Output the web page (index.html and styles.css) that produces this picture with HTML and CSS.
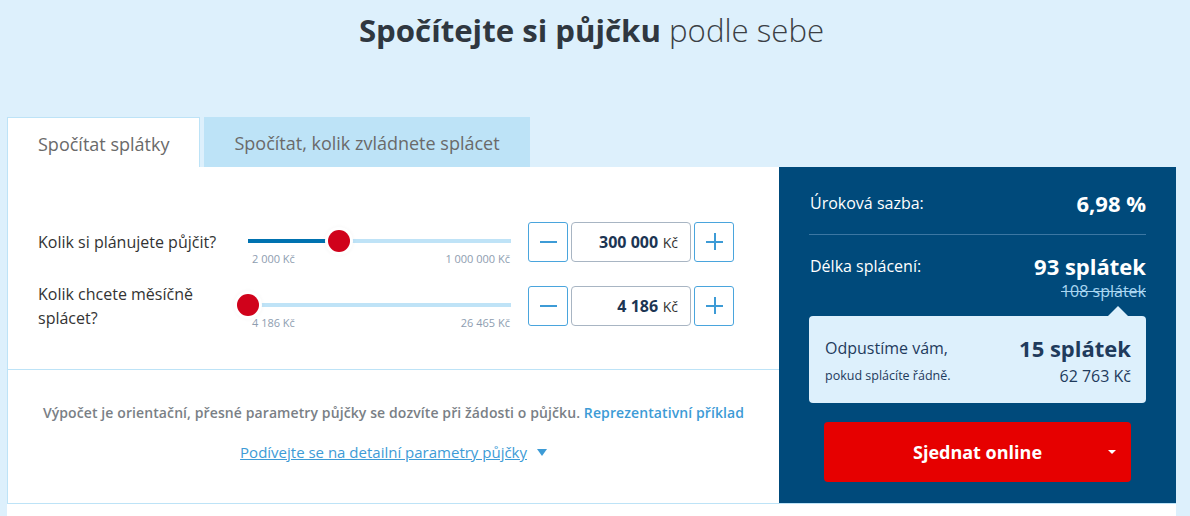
FILE: index.html
```html
<!DOCTYPE html>
<html lang="cs">
<head>
    <meta charset="UTF-8">
    <meta name="viewport" content="width=device-width, initial-scale=1.0">
    <title>Spočítejte si půjčku podle sebe</title>
    <link rel="stylesheet" href="styles.css">
</head>
<body>
    <!-- Nadpis -->
    <h1 class="title"><strong>Spočítejte si půjčku</strong> podle sebe</h1>

    <div class="calc">
        <!-- Záložky -->
        <div class="tabs">
            <div class="tab active">Spočítat splátky</div>
            <div class="tab">Spočítat, kolik zvládnete splácet</div>
        </div>

        <div class="card">
            <div class="card-left">
                <div class="sliders">
                    <div class="row">
                        <label class="row-label">Kolik si plánujete půjčit?</label>
                        <div class="slider">
                            <div class="track">
                                <div class="fill" style="width: 31%"></div>
                                <div class="thumb" style="left: 34.6%"></div>
                            </div>
                            <div class="range-labels">
                                <span>2 000 Kč</span>
                                <span>1 000 000 Kč</span>
                            </div>
                        </div>
                        <div class="stepper">
                            <button class="step minus" aria-label="Méně"></button>
                            <div class="value"><b>300 000</b> Kč</div>
                            <button class="step plus" aria-label="Více"></button>
                        </div>
                    </div>
                    <div class="row">
                        <label class="row-label">Kolik chcete měsíčně<br>splácet?</label>
                        <div class="slider">
                            <div class="track">
                                <div class="thumb" style="left: 0%"></div>
                            </div>
                            <div class="range-labels">
                                <span>4 186 Kč</span>
                                <span>26 465 Kč</span>
                            </div>
                        </div>
                        <div class="stepper">
                            <button class="step minus" aria-label="Méně"></button>
                            <div class="value"><b>4 186</b> Kč</div>
                            <button class="step plus" aria-label="Více"></button>
                        </div>
                    </div>
                </div>

                <div class="note">
                    <p>Výpočet je orientační, přesné parametry půjčky se dozvíte při žádosti o půjčku. <a href="#">Reprezentativní příklad</a></p>
                    <p class="more-link"><a href="#" class="details">Podívejte se na detailní parametry půjčky</a> <span class="caret-blue"></span></p>
                </div>
            </div>

            <!-- Výsledek -->
            <div class="card-right">
                <div class="result-row rate">
                    <span>Úroková sazba:</span>
                    <strong>6,98 %</strong>
                </div>
                <div class="result-row length">
                    <span>Délka splácení:</span>
                    <strong>93 splátek</strong>
                </div>
                <div class="old">108 splátek</div>

                <div class="forgive">
                    <span class="forgive-big">Odpustíme vám,</span>
                    <strong>15 splátek</strong>
                    <span class="forgive-small">pokud splácíte řádně.</span>
                    <span class="forgive-sum">62 763 Kč</span>
                </div>

                <button class="cta">Sjednat online <span class="caret"></span></button>
            </div>
        </div>
        <div class="more"></div>
    </div>
</body>
</html>
```

FILE: styles.css
```css
/* základ */
body {
    margin: 0;
    height: 516px;
    overflow: hidden;
    background: #ddf0fc;
    font-family: 'Open Sans', 'Noto Sans', sans-serif;
    color: #333;
}

.title {
    margin: 0 14px 0 7px;
    padding-top: 10px;
    height: 107px;
    box-sizing: border-box;
    text-align: center;
    font-size: 31.2px;
    line-height: 40px;
    font-weight: 300;
    color: #3b3f45;
}

.title strong {
    font-weight: 700;
    color: #2f3740;
}

.calc {
    margin: 0 14px 0 7px;
}

/* záložky */
.tabs {
    display: flex;
    gap: 4px;
    margin-top: 10px;
}

.tab {
    height: 50px;
    line-height: 52px;
    padding: 0 30px;
    font-size: 18px;
    color: #6a6a6a;
    background: #bde3f7;
    box-sizing: border-box;
}

.tab.active {
    background: #fff;
    border: 1px solid #bde3f7;
    border-bottom: none;
    padding: 0 30px;
}

/* karta */
.card {
    display: flex;
    height: 336px;
    background: #fff;
    border-left: 1px solid #bde3f7;
    border-bottom: 1px solid #bde3f7;
}

.card-left {
    flex: 1;
    display: flex;
    flex-direction: column;
}

.sliders {
    height: 203px;
    padding: 55px 0 0 30px;
    box-sizing: border-box;
    border-bottom: 1px solid #bde3f7;
}

.row {
    display: flex;
    align-items: center;
    height: 40px;
    margin-bottom: 24px;
}

.row-label {
    width: 210px;
    font-size: 16px;
    line-height: 24px;
    color: #333;
}

.slider {
    width: 263px;
    margin-right: 17px;
    padding-top: 17px;
    align-self: flex-start;
}

.track {
    position: relative;
    height: 4px;
    background: #bfe3f7;
}

.fill {
    height: 100%;
    background: #0072b0;
}

.thumb {
    position: absolute;
    top: 50%;
    width: 22px;
    height: 22px;
    margin: -11px 0 0 -11px;
    border-radius: 50%;
    background: #d0021b;
    box-shadow: 0 0 0 3px #fff, 0 0 4px 3px rgba(0,0,0,0.04);
}

.range-labels {
    display: flex;
    justify-content: space-between;
    margin-top: 9px;
    padding: 0 1px 0 4px;
    font-size: 11px;
    line-height: 14px;
    color: #8e9db0;
}

.stepper {
    display: flex;
    gap: 3px;
}

.step {
    position: relative;
    width: 40px;
    height: 40px;
    padding: 0;
    border: 1px solid #4aa5dd;
    border-radius: 3px;
    background: #fff;
    cursor: pointer;
}

.step::before,
.plus::after {
    content: '';
    position: absolute;
    left: 11px;
    top: 18px;
    width: 17px;
    height: 2px;
    background: #3d9bd6;
}

.plus::after {
    left: 19px;
    top: 10px;
    width: 2px;
    height: 17px;
}

.value {
    width: 120px;
    height: 40px;
    box-sizing: border-box;
    border: 1px solid #a8b5c3;
    border-radius: 4px;
    padding-right: 12px;
    text-align: right;
    line-height: 38px;
    font-size: 14px;
    color: #333;
}

.value b {
    font-size: 16px;
    color: #1c3553;
    margin-right: 1px;
}

/* poznámka */
.note {
    flex: 1;
    text-align: center;
    padding-top: 34px;
    font-size: 14px;
}

.note p {
    margin: 0 0 21px;
    line-height: 18px;
    font-weight: 600;
    color: #7a7f86;
    letter-spacing: 0.1px;
}

.note a {
    color: #3d9bd6;
    text-decoration: none;
}

.note .more-link {
    font-size: 15px;
    letter-spacing: 0;
}

.note a.details {
    font-weight: 400;
    text-decoration: underline;
}

.caret-blue {
    display: inline-block;
    margin-left: 6px;
    border-left: 5px solid transparent;
    border-right: 5px solid transparent;
    border-top: 7px solid #3d9bd6;
    vertical-align: 2px;
}

/* pravý panel */
.card-right {
    width: 336px;
    padding: 20px 30px 0 31px;
    background: #004a7b;
    color: #fff;
}

.result-row {
    display: flex;
    justify-content: space-between;
    align-items: center;
    height: 32px;
    font-size: 16px;
}

.result-row strong {
    font-size: 22px;
}

.rate {
    padding-bottom: 15px;
    border-bottom: 1px solid #3c77a3;
    margin-bottom: 15px;
    margin-left: -1px;
    padding-left: 1px;
}

.old {
    text-align: right;
    font-size: 16px;
    line-height: 18px;
    color: #a9d6f1;
    text-decoration: line-through;
}

.forgive {
    position: relative;
    display: grid;
    grid-template-columns: 1fr auto;
    margin: 16px 0 0 -1px;
    padding: 18px 15px 13px 16px;
    background: #ddf0fc;
    border-radius: 4px;
    color: #1f3b5c;
}

.forgive::before {
    content: '';
    position: absolute;
    top: -10px;
    right: 18px;
    border-left: 10px solid transparent;
    border-right: 10px solid transparent;
    border-bottom: 10px solid #ddf0fc;
}

.forgive > * {
    line-height: 28px;
}

.forgive-big {
    font-size: 16px;
}

.forgive strong {
    font-size: 22px;
    text-align: right;
}

.forgive-small {
    font-size: 12.5px;
}

.forgive-sum {
    font-size: 16px;
    text-align: right;
}

.cta {
    position: relative;
    display: block;
    width: 307px;
    height: 60px;
    margin: 19px 0 0 14px;
    border: none;
    border-radius: 4px;
    background: #e60000;
    color: #fff;
    font-family: inherit;
    font-size: 18px;
    font-weight: 700;
    cursor: pointer;
}

.caret {
    position: absolute;
    right: 15px;
    top: 28px;
    border-left: 4px solid transparent;
    border-right: 4px solid transparent;
    border-top: 4px solid #fff;
}

.more {
    height: 13px;
    background: #fff;
}
```
